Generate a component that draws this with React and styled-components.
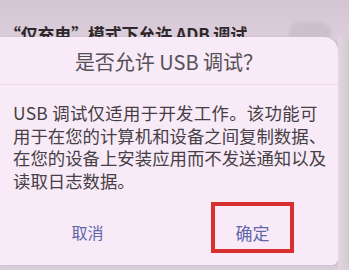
import React from "react";
import styled, { createGlobalStyle } from "styled-components";

const Global = createGlobalStyle`
  html, body { margin: 0; padding: 0; }
  body {
    width: 349px;
    height: 270px;
    overflow: hidden;
    background: #d6c9d5;
    font-family: "Noto Sans CJK SC", "Noto Sans", sans-serif;
  }
`;

const Page = styled.div`
  width: 349px;
  height: 270px;
  display: flex;
  flex-direction: column;
  background: linear-gradient(180deg, #d3c5d2 0%, #dccfdb 40px, #d8ccd8 100%);
`;

const SettingRow = styled.div`
  height: 37px;
  overflow: hidden;
  box-sizing: border-box;
  padding: 23px 0 0 4px;
  display: flex;
  justify-content: space-between;
  align-items: flex-start;
`;

const SettingLabel = styled.div`
  font-size: 17px;
  font-weight: 700;
  line-height: 22px;
  color: #2e282d;
  white-space: nowrap;
  letter-spacing: -0.2px;
`;

const Toggle = styled.div`
  width: 42px;
  height: 22px;
  border-radius: 11px;
  margin: -1px 18px 0 0;
  background: #cdbfcc;
  filter: blur(1.5px);
`;

const Main = styled.div`
  display: flex;
  flex: 1;
  min-height: 0;
`;

const Dialog = styled.div`
  width: 338px;
  height: 228px;
  background: #f8eaf7;
  border-radius: 0 14px 6px 0;
  display: flex;
  flex-direction: column;
  box-shadow: 1px 0 2px rgba(120, 100, 120, 0.25);
`;

const Side = styled.div`
  flex: 1;
  background: linear-gradient(90deg, #e2d6e1 0%, #d5c9d4 100%);
`;

const Title = styled.div`
  height: 48px;
  display: flex;
  align-items: center;
  justify-content: center;
  font-size: 20px;
  color: #555055;
  padding-top: 2px;
  box-sizing: border-box;
  border-bottom: 1px solid #ecdcea;
`;

const Body = styled.div`
  padding: 17px 0 10px 13px;
  font-size: 17.4px;
  line-height: 22.5px;
  color: #454045;
`;

const Line = styled.span`
  display: block;
  white-space: nowrap;
  letter-spacing: ${(p) => p.$ls || "0px"};
`;

const Buttons = styled.div`
  display: flex;
  height: 51px;
`;

const Action = styled.div`
  flex: 1;
  display: flex;
  align-items: center;
  justify-content: center;
  padding: ${(p) => (p.$boxed ? "0" : "9px 0 0 4px")};
  box-sizing: border-box;
  font-size: 16px;
  color: #5d67aa;
`;

const Highlight = styled.span`
  width: 83px;
  height: 51px;
  box-sizing: border-box;
  border: 4px solid #d8302f;
  display: flex;
  align-items: center;
  justify-content: center;
  padding-top: 9px;
  margin-right: 4px;
  font-size: 17px;
`;

export default function App() {
  return (
    <>
      <Global />
      <Page>
        <SettingRow>
          <SettingLabel>“仅充电”模式下允许 ADB 调试</SettingLabel>
          <Toggle />
        </SettingRow>
        <Main>
          <Dialog>
            <Title>是否允许 USB 调试？</Title>
            <Body>
              <Line $ls="0.3px">USB 调试仅适用于开发工作。该功能可</Line>
              <Line>用于在您的计算机和设备之间复制数据、</Line>
              <Line>在您的设备上安装应用而不发送通知以及</Line>
              <Line>读取日志数据。</Line>
            </Body>
            <Buttons>
              <Action>取消</Action>
              <Action $boxed>
                <Highlight>确定</Highlight>
              </Action>
            </Buttons>
          </Dialog>
          <Side />
        </Main>
      </Page>
    </>
  );
}
